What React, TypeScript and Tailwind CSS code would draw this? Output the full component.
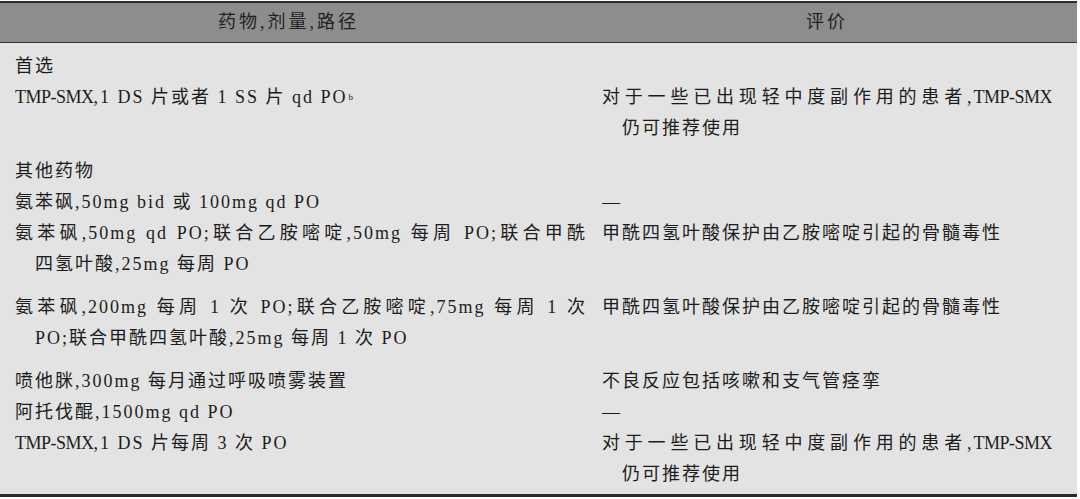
import type { ReactNode } from "react";

type Line = { text: ReactNode; indent?: boolean; justify?: boolean };

type Row = {
  left: Line[];
  right: Line[];
  gapAfter?: boolean;
};

// TMP-SMX looks condensed in the scan
const tmp = <span className="tracking-[-0.5px]">TMP-SMX</span>;

const comment: Line[] = [
  { text: <>对于一些已出现轻中度副作用的患者,{tmp}</>, justify: true },
  { text: "仍可推荐使用", indent: true },
];

const rows: Row[] = [
  { left: [{ text: "首选" }], right: [] },
  {
    left: [
      {
        text: (
          <>
            {tmp},1 DS 片或者 1 SS 片 qd PO
            <sup className="text-[9px] relative -top-[3px] ml-px">b</sup>
          </>
        ),
      },
    ],
    right: comment,
    gapAfter: true,
  },
  { left: [{ text: "其他药物" }], right: [] },
  {
    left: [{ text: "氨苯砜,50mg bid 或 100mg qd PO" }],
    right: [{ text: "—" }],
  },
  {
    left: [
      { text: "氨苯砜,50mg qd PO;联合乙胺嘧啶,50mg 每周 PO;联合甲酰", justify: true },
      { text: "四氢叶酸,25mg 每周 PO", indent: true },
    ],
    right: [{ text: "甲酰四氢叶酸保护由乙胺嘧啶引起的骨髓毒性" }],
    gapAfter: true,
  },
  {
    left: [
      { text: "氨苯砜,200mg 每周 1 次 PO;联合乙胺嘧啶,75mg 每周 1 次", justify: true },
      { text: "PO;联合甲酰四氢叶酸,25mg 每周 1 次 PO", indent: true },
    ],
    right: [{ text: "甲酰四氢叶酸保护由乙胺嘧啶引起的骨髓毒性" }],
    gapAfter: true,
  },
  {
    left: [{ text: "喷他脒,300mg 每月通过呼吸喷雾装置" }],
    right: [{ text: "不良反应包括咳嗽和支气管痉挛" }],
  },
  {
    left: [{ text: "阿托伐醌,1500mg qd PO" }],
    right: [{ text: "—" }],
  },
  {
    left: [{ text: <>{tmp},1 DS 片每周 3 次 PO</> }],
    right: comment,
  },
];

function Cell({ lines, width }: { lines: Line[]; width: string }) {
  return (
    <div className="pl-[15px] flex flex-col">
      {lines.map((l, i) => (
        <div
          key={i}
          className={`h-[31px] leading-[31px] overflow-hidden ${
            l.justify
              ? `${width} text-justify [text-align-last:justify]`
              : "whitespace-nowrap"
          } ${l.indent ? "pl-[20px]" : ""}`}
        >
          {l.text}
        </div>
      ))}
    </div>
  );
}

export default function App() {
  return (
    <div
      lang="zh-CN"
      className="w-[1080px] h-[499px] bg-white pt-px text-[18px] tracking-[2px] text-[#1c1c1c]"
      style={{ fontFamily: '"Liberation Serif", "Noto Sans CJK SC", serif' }}
    >
      <div className="w-[1077px] bg-[#e3e3e3] border-t-2 border-b-[3px] border-[#2a2a2a]">
        <div className="grid grid-cols-[587px_1fr] h-[40px] items-center bg-[#8d8d8d] border-b border-[#333] text-[#222] tracking-[3px]">
          <div className="text-center pr-[10px]">药物,剂量,路径</div>
          <div className="text-center pr-[10px]">评价</div>
        </div>
        <div className="pt-2 pb-1 flex flex-col">
          {rows.map((r, i) => (
            <div
              key={i}
              className={`grid grid-cols-[587px_1fr] ${r.gapAfter ? "mb-[12px]" : ""}`}
            >
              <Cell lines={r.left} width="w-[572px]" />
              <Cell lines={r.right} width="w-[450px]" />
            </div>
          ))}
        </div>
      </div>
    </div>
  );
}
